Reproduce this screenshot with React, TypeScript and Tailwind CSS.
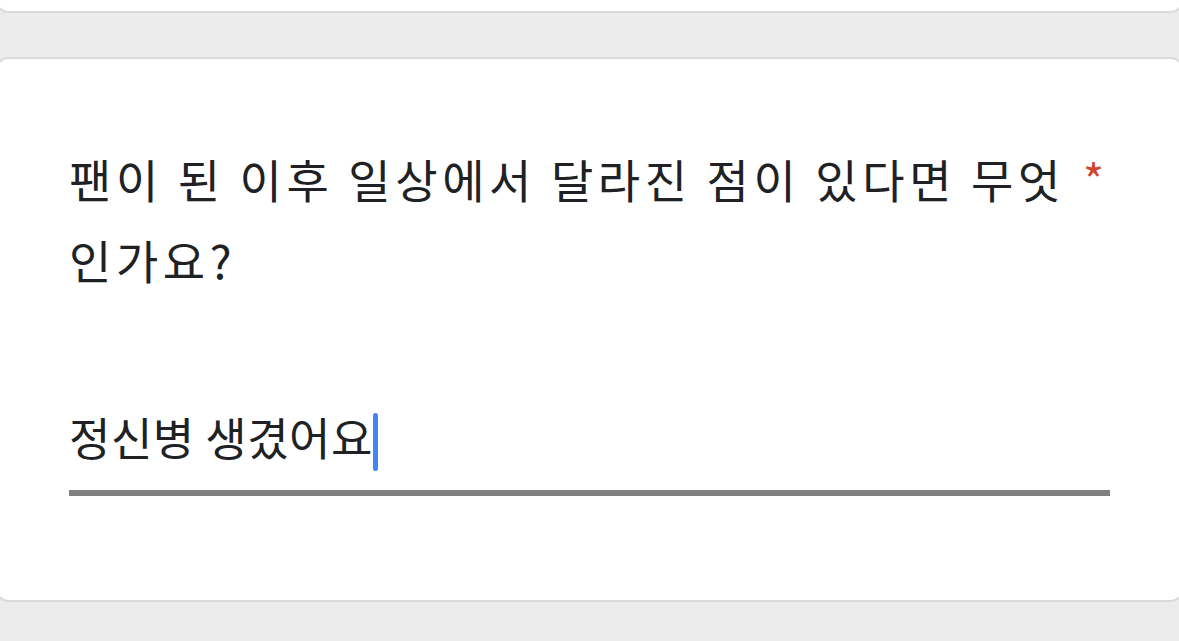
export default function App() {
  const font = { fontFamily: '"Noto Sans CJK KR", "Noto Sans", sans-serif' };
  return (
    <div className="w-[1179px] h-[641px] bg-[#ececec] overflow-hidden flex flex-col" style={font}>
      <div className="-mx-[4px] h-[13px] shrink-0 bg-white border-2 border-t-0 border-[#dadada] rounded-b-[12px]" />
      <div className="-mx-[4px] mt-[44px] h-[545px] shrink-0 bg-white border-2 border-[#dadada] rounded-[12px] pl-[71px] pr-[71px] pt-[79px]">
        <div className="flex items-start">
          <div className="w-[1010px] shrink-0 break-keep tracking-[4.6px] text-[46px] leading-[81px] text-[#202124]">
            팬이 된 이후 일상에서 달라진 점이 있다면 무엇 인가요?
          </div>
          <span className="ml-[4px] text-[45px] leading-[81px] text-[#d0452f]">*</span>
        </div>
        <div className="mt-[107px] flex items-center h-[60px] text-[45px] leading-[60px] text-[#202124]">
          <span className="tracking-[0.5px]">정신병 생겼어요</span>
          <span className="inline-block w-[5px] h-[58px] mt-[10px] rounded-full bg-[#4285f4]" />
        </div>
        <div className="mt-[23px] h-[6px] bg-[#7f7f7f]" />
      </div>
    </div>
  );
}
